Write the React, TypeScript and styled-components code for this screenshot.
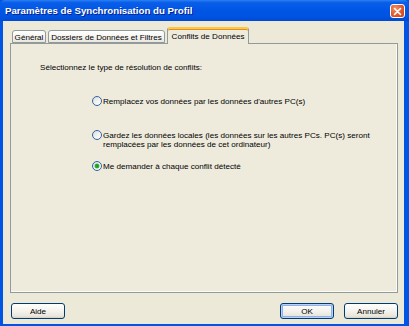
import React, { useState } from "react";
import styled, { createGlobalStyle } from "styled-components";

const GlobalStyle = createGlobalStyle`
  html, body {
    margin: 0;
    padding: 0;
    width: 409px;
    height: 326px;
    overflow: hidden;
    background: #ece9d8;
  }
  * {
    box-sizing: border-box;
  }
`;

const uiFont = `"Liberation Sans", Arial, sans-serif`;

const Window = styled.div`
  width: 409px;
  height: 326px;
  display: flex;
  flex-direction: column;
  background: #0055e5;
  font-family: ${uiFont};
  font-size: 8.1px;
  color: #000;
`;

const TitleBar = styled.div`
  height: 21px;
  flex: none;
  display: flex;
  align-items: center;
  justify-content: space-between;
  padding: 0 4px 0 5px;
  background: linear-gradient(
    to bottom,
    #2a80f2 0%,
    #0a5ee8 12%,
    #0056e6 45%,
    #0053e1 80%,
    #0049d4 100%
  );
  border-radius: 5px 5px 0 0;
`;

const TitleText = styled.span`
  color: #fff;
  font-weight: bold;
  font-size: 9.7px;
  text-shadow: 1px 1px 0 #0a1e8a;
  white-space: nowrap;
`;

const CloseButton = styled.div`
  width: 15px;
  height: 14px;
  border: 1px solid #fff;
  border-radius: 3px;
  background: radial-gradient(circle at 35% 30%, #f08f6b 0%, #e0582b 55%, #c4401a 100%);
  display: flex;
  align-items: center;
  justify-content: center;
  margin-top: 1px;
`;

const Body = styled.div`
  flex: 1;
  display: flex;
  flex-direction: column;
  margin: 0 5px 2px 3px;
  padding: 6px 6px 5px 7px;
  background: #ece9d8;
`;

const TabStrip = styled.div`
  height: 16px;
  flex: none;
  display: flex;
  align-items: flex-end;
  padding-left: 2px;
  gap: 2px;
  position: relative;
  z-index: 1;
`;

const Tab = styled.div<{ $active?: boolean; $w: number }>`
  width: ${(p) => p.$w}px;
  height: ${(p) => (p.$active ? 17 : 13)}px;
  margin-bottom: ${(p) => (p.$active ? -1 : 0)}px;
  display: flex;
  align-items: center;
  justify-content: center;
  white-space: nowrap;
  padding-top: ${(p) => (p.$active ? 0 : 1)}px;
  border: 1px solid #919b9c;
  border-bottom: ${(p) => (p.$active ? "none" : "1px solid #919b9c")};
  border-top: ${(p) => (p.$active ? "2px solid #ffc83c" : "1px solid #919b9c")};
  border-radius: 3px 3px 0 0;
  background: ${(p) =>
    p.$active
      ? "#eeebdd"
      : "linear-gradient(to bottom, #fefefe 0%, #f4f3ee 60%, #e8e6dc 100%)"};
  box-shadow: ${(p) => (p.$active ? "inset 0 1px 0 #e68b2c" : "none")};
`;

const Panel = styled.div`
  flex: 1;
  border: 1px solid #919b9c;
  background: #eeebdd;
  box-shadow: inset -1px -1px 0 #fbfaf6;
  padding: 19px 0 0 29px;
  display: flex;
  flex-direction: column;
`;

const Prompt = styled.div`
  line-height: 10px;
  white-space: nowrap;
`;

const OptionList = styled.div`
  display: flex;
  flex-direction: column;
  margin-left: 52px;
`;

const OptionRow = styled.label<{ $space: number }>`
  display: flex;
  align-items: flex-start;
  gap: 1px;
  margin-top: ${(p) => p.$space}px;
  cursor: default;
`;

const RadioDot = styled.span<{ $checked: boolean }>`
  width: 10px;
  height: 10px;
  flex: none;
  margin-top: -1px;
  border-radius: 50%;
  border: 1px solid #2f64a8;
  background: linear-gradient(135deg, #dcdbd3 0%, #f4f3ee 55%, #ffffff 100%);
  display: flex;
  align-items: center;
  justify-content: center;

  &::after {
    content: "";
    display: ${(p) => (p.$checked ? "block" : "none")};
    width: 4px;
    height: 4px;
    border-radius: 50%;
    background: #21a121;
    box-shadow: 0 0 0 0.5px #5ec85e;
  }
`;

const OptionText = styled.span`
  line-height: 9px;
  white-space: nowrap;
`;

const Footer = styled.div`
  flex: none;
  display: flex;
  align-items: center;
  margin-top: 10px;
  padding-left: 1px;
  gap: 10px;
`;

const Spacer = styled.div`
  flex: 1;
`;

const Button = styled.button<{ $default?: boolean }>`
  width: 54px;
  height: 16px;
  padding: 0;
  font-family: ${uiFont};
  font-size: 8.1px;
  color: #000;
  border: 1px solid #003c74;
  border-radius: 3px;
  background: linear-gradient(to bottom, #ffffff 0%, #f5f4ef 45%, #e9e7dd 85%, #d6d0c5 100%);
  box-shadow: ${(p) =>
    p.$default ? "inset 0 0 0 1px #b8d0f6, inset 0 0 0 2px #8fb0ea" : "none"};
`;

const options = [
  { id: "replace", lines: ["Remplacez vos données par les données d'autres PC(s)"], space: 24 },
  {
    id: "keep",
    lines: [
      "Gardez les données locales (les données sur les autres PCs. PC(s) seront",
      "remplacées par les données de cet ordinateur)",
    ],
    space: 25,
  },
  { id: "ask", lines: ["Me demander à chaque conflit détecté"], space: 13 },
];

export default function App() {
  const [choice, setChoice] = useState("ask");

  return (
    <>
      <GlobalStyle />
      <Window>
        <TitleBar>
          <TitleText>Paramètres de Synchronisation du Profil</TitleText>
          <CloseButton>
            <svg width="9" height="9" viewBox="0 0 9 9">
              <path d="M1.5 1.5 L7.5 7.5 M7.5 1.5 L1.5 7.5" stroke="#fff" strokeWidth="1.6" strokeLinecap="round" />
            </svg>
          </CloseButton>
        </TitleBar>
        <Body>
          <TabStrip>
            <Tab $w={34}>Général</Tab>
            <Tab $w={117}>Dossiers de Données et Filtres</Tab>
            <Tab $w={82} $active>
              Conflits de Données
            </Tab>
          </TabStrip>
          <Panel>
            <Prompt>Sélectionnez le type de résolution de conflits:</Prompt>
            <OptionList>
              {options.map((o) => (
                <OptionRow key={o.id} $space={o.space} onClick={() => setChoice(o.id)}>
                  <RadioDot $checked={choice === o.id} />
                  <OptionText>
                    {o.lines.map((l, i) => (
                      <React.Fragment key={i}>
                        {i > 0 && <br />}
                        {l}
                      </React.Fragment>
                    ))}
                  </OptionText>
                </OptionRow>
              ))}
            </OptionList>
          </Panel>
          <Footer>
            <Button>Aide</Button>
            <Spacer />
            <Button $default>OK</Button>
            <Button>Annuler</Button>
          </Footer>
        </Body>
      </Window>
    </>
  );
}
